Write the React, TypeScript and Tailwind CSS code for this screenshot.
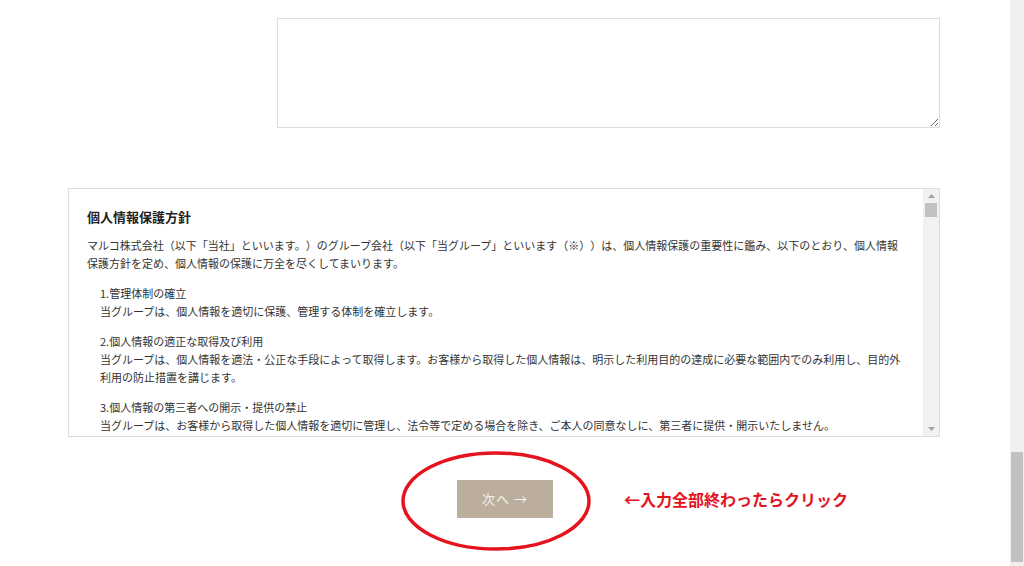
import React from "react";

const font = { fontFamily: '"Noto Sans CJK JP", "Noto Sans", sans-serif' };

const items = [
  {
    head: "1.管理体制の確立",
    lines: ["当グループは、個人情報を適切に保護、管理する体制を確立します。"],
  },
  {
    head: "2.個人情報の適正な取得及び利用",
    lines: [
      "当グループは、個人情報を適法・公正な手段によって取得します。お客様から取得した個人情報は、明示した利用目的の達成に必要な範囲内でのみ利用し、目的外",
      "利用の防止措置を講じます。",
    ],
  },
  {
    head: "3.個人情報の第三者への開示・提供の禁止",
    lines: [
      "当グループは、お客様から取得した個人情報を適切に管理し、法令等で定める場合を除き、ご本人の同意なしに、第三者に提供・開示いたしません。",
    ],
  },
];

function Arrow({ up }: { up?: boolean }) {
  return (
    <div className="flex h-[14px] items-center justify-center">
      <svg width="7" height="4" viewBox="0 0 7 4">
        <path d={up ? "M0 4 L3.5 0 L7 4 Z" : "M0 0 L3.5 4 L7 0 Z"} fill="#a3a3a3" />
      </svg>
    </div>
  );
}

export default function App() {
  return (
    <div
      className="flex h-[566px] w-[1024px] overflow-hidden bg-white text-[#333] [text-spacing-trim:space-all]"
      style={font}
    >
      <main className="relative flex-1">
        <div className="pl-[277px] pr-[70px] pt-[18px]">
          <textarea
            readOnly
            className="block h-[110px] w-full resize border border-[#dcdcdc] bg-white outline-none"
          />
        </div>

        <section className="ml-[68px] mr-[70px] mt-[60px] flex h-[249px] border border-[#dddddd]">
          <div className="flex-1 overflow-hidden pl-[18px] pr-[10px] pt-[18px]">
            <h2 className="text-[13px] font-bold leading-[20px] text-[#222]">個人情報保護方針</h2>
            <p className="mt-[9px] whitespace-nowrap text-[11px] leading-[18px]">
              マルコ株式会社（以下「当社」といいます。）のグループ会社（以下「当グループ」といいます（※））は、個人情報保護の重要性に鑑み、以下のとおり、個人情報
              <br />
              保護方針を定め、個人情報の保護に万全を尽くしてまいります。
            </p>
            {items.map((it) => (
              <div key={it.head} className="mt-[12px] whitespace-nowrap pl-[13px] text-[11px] leading-[18px]">
                <div>{it.head}</div>
                {it.lines.map((l) => (
                  <div key={l}>{l}</div>
                ))}
              </div>
            ))}
          </div>
          <div className="flex w-[16px] flex-col bg-[#f1f1f1]">
            <Arrow up />
            <div className="mx-[2px] h-[14px] bg-[#c1c1c1]" />
            <div className="flex-1" />
            <Arrow />
          </div>
        </section>

        <div className="relative mt-[43px] flex justify-center">
          <button className="h-[38px] w-[96px] bg-[#bcae9d] text-[13px] tracking-[1px] text-[#f7f3ee]">
            次へ →
          </button>
          <svg
            className="pointer-events-none absolute left-[398px] top-[-31px]"
            width="196"
            height="104"
            viewBox="0 0 196 104"
          >
            <ellipse cx="98" cy="52" rx="93" ry="48" fill="none" stroke="#e5131d" strokeWidth="3.5" />
          </svg>
          <span className="absolute left-[624px] top-[7px] text-[16px] font-bold leading-[24px] text-[#e5131d]">
            ←入力全部終わったらクリック
          </span>
        </div>
      </main>

      <div className="flex w-[14px] flex-col justify-end bg-[#f0f0f0] pb-[4px]">
        <div className="mx-[1px] h-[110px] bg-[#c1c1c1]" />
      </div>
    </div>
  );
}
